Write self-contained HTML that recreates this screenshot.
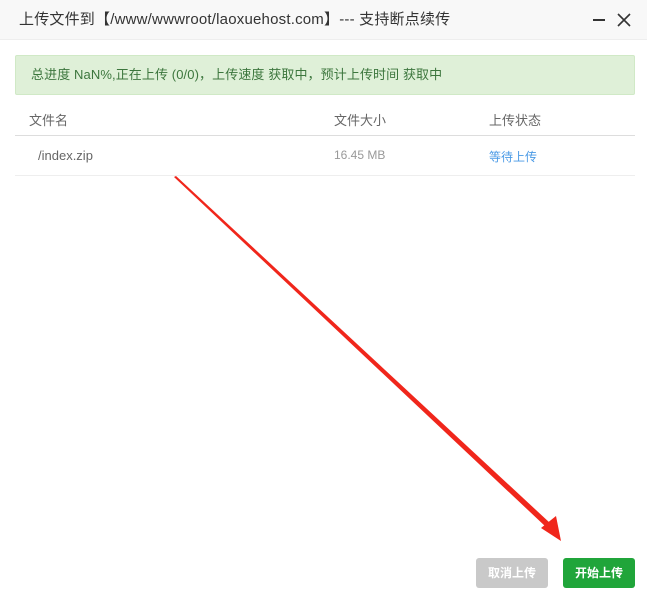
<!DOCTYPE html>
<html><head><meta charset="utf-8"><style>
body{margin:0;width:647px;height:600px;background:#fff;font-family:"Liberation Sans","Noto Sans CJK SC",sans-serif;position:relative;overflow:hidden}
.hd{position:absolute;left:0;top:0;width:647px;height:39px;background:#f8f8f8;border-bottom:1px solid #eee;font-size:15px;color:#333;line-height:39px}
.hd span{position:absolute;left:19px;letter-spacing:0.2px}
.alert{position:absolute;left:15px;top:55px;width:618px;height:38px;background:#dff0d8;border:1px solid #d0e9c6;border-radius:2px;color:#3c763d;font-size:13px;line-height:38px;box-sizing:content-box}
.alert span{margin-left:15px;letter-spacing:0.1px}
.t{position:absolute;font-size:13px}
.line{position:absolute;left:15px;width:620px;height:1px;background:#ddd}
.btn{position:absolute;top:558px;width:72px;height:30px;border-radius:3px;color:#fff;font-size:12px;font-weight:bold;text-align:center;line-height:30px}
</style></head><body>
<div class="hd"><span>上传文件到【/www/wwwroot/laoxuehost.com】--- 支持断点续传</span></div>
<div style="position:absolute;left:593px;top:19px;width:12px;height:2px;background:#333"></div>
<svg style="position:absolute;left:617px;top:13px" width="14" height="14"><path d="M1 1L13 13M13 1L1 13" stroke="#333" stroke-width="1.6"/></svg>
<div class="alert"><span>总进度 NaN%,正在上传 (0/0)，上传速度 获取中，预计上传时间 获取中</span></div>
<div class="t" style="left:29px;top:110px;color:#666">文件名</div>
<div class="t" style="left:334px;top:110px;color:#666">文件大小</div>
<div class="t" style="left:489px;top:110px;color:#666">上传状态</div>
<div class="line" style="top:135px"></div>
<div class="t" style="left:38px;top:148px;color:#666">/index.zip</div>
<div class="t" style="left:334px;top:148px;color:#999;font-size:12px">16.45 MB</div>
<div class="t" style="left:489px;top:148px;color:#4a9ae6;font-size:12px">等待上传</div>
<div class="line" style="top:175px;background:#eee"></div>
<svg style="position:absolute;left:0;top:0" width="647" height="600">
<polygon points="174,177 176,176 550,523 546,527" fill="#f0261b"/>
<polygon points="561,541 541,528 556,516" fill="#f0261b"/>
</svg>
<div class="btn" style="left:476px;background:#c9c9c9">取消上传</div>
<div class="btn" style="left:563px;background:#20a53a">开始上传</div>
</body></html>
